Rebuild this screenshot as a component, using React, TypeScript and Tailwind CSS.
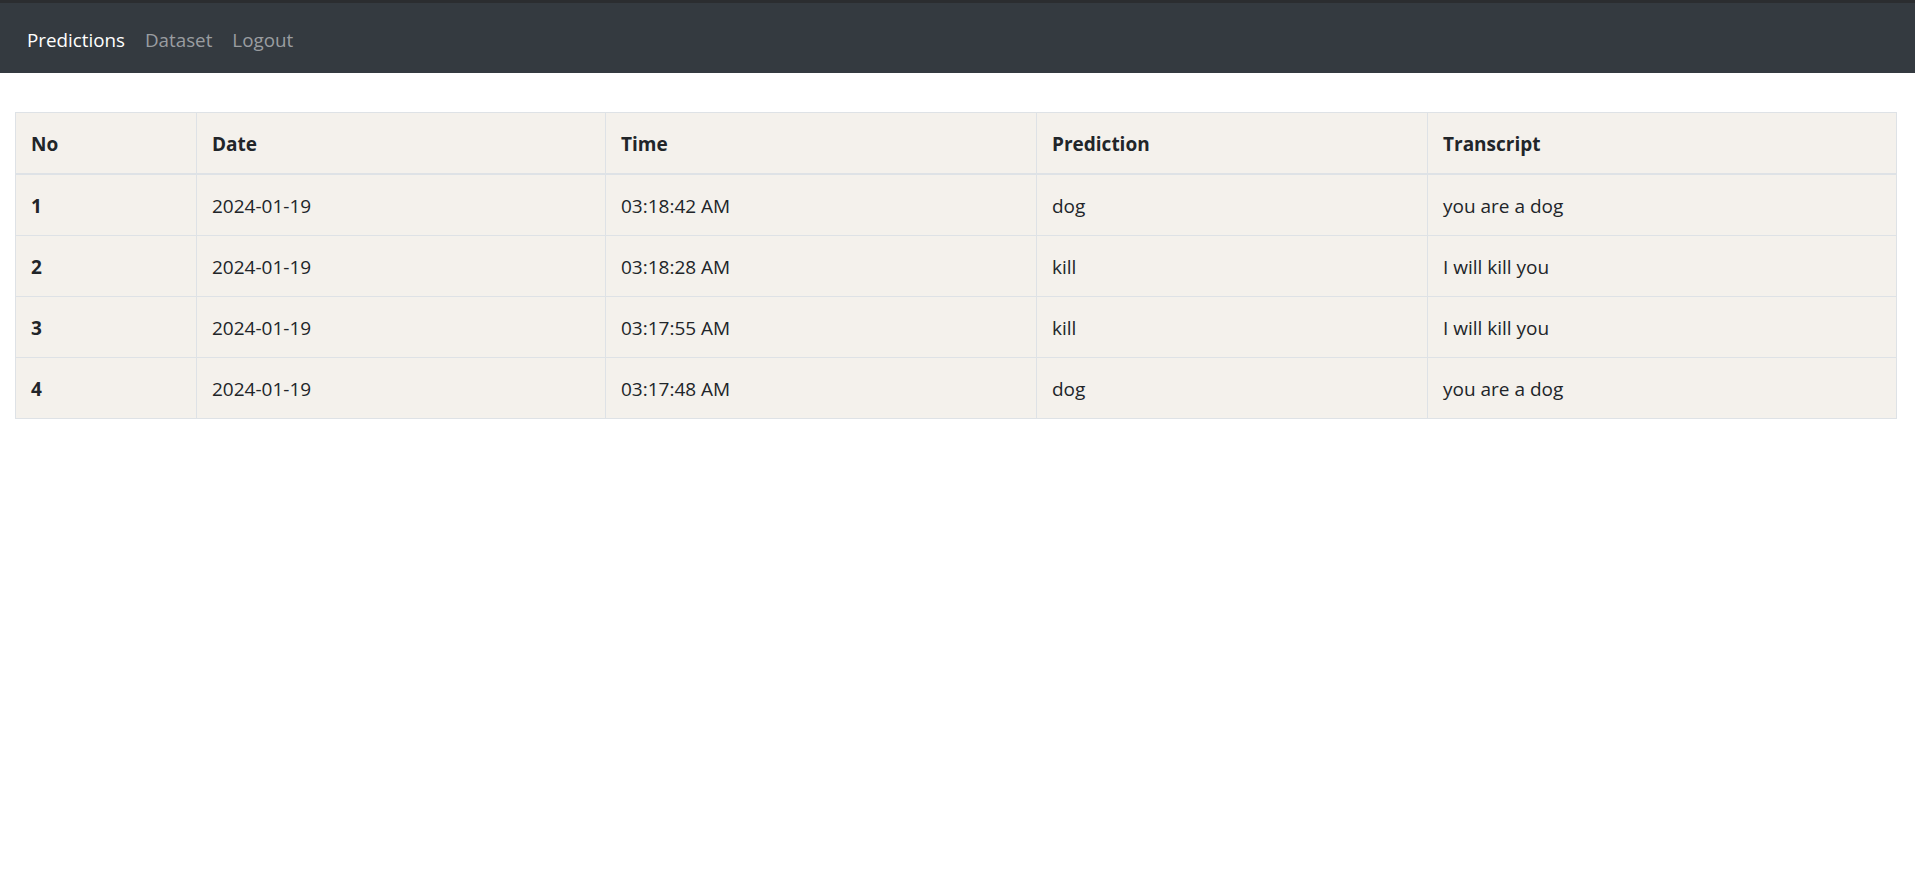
import React from 'react';

interface Prediction {
  no: number;
  date: string;
  time: string;
  prediction: string;
  transcript: string;
}

const predictions: Prediction[] = [
  { no: 1, date: '2024-01-19', time: '03:18:42 AM', prediction: 'dog', transcript: 'you are a dog' },
  { no: 2, date: '2024-01-19', time: '03:18:28 AM', prediction: 'kill', transcript: 'I will kill you' },
  { no: 3, date: '2024-01-19', time: '03:17:55 AM', prediction: 'kill', transcript: 'I will kill you' },
  { no: 4, date: '2024-01-19', time: '03:17:48 AM', prediction: 'dog', transcript: 'you are a dog' },
];

const App: React.FC = () => {
  return (
    <div className="min-h-screen bg-white text-[#212529] font-['Open_Sans',sans-serif] text-[19px]">
      {/* Navbar */}
      <nav className="h-[73px] bg-[#343a40] border-t-[3px] border-[#2b2d30] flex items-center pt-[4px] px-[17px] text-[18.8px]">
        <a href="#" className="px-[10px] text-white">Predictions</a>
        <a href="#" className="px-[10px] text-[#9a9da0]">Dataset</a>
        <a href="#" className="px-[10px] text-[#9a9da0]">Logout</a>
      </nav>

      {/* Predictions table */}
      <div className="pl-[15px] pr-[18px] pt-[39px]">
        <table className="w-full border-collapse bg-[#f4f1ec] leading-[30px]">
          <thead>
            <tr>
              <th className="w-[181px] border border-b-2 border-[#dee2e6] px-[15px] pt-[16px] pb-[14px] text-left font-bold">No</th>
              <th className="w-[409px] border border-b-2 border-[#dee2e6] px-[15px] pt-[16px] pb-[14px] text-left font-bold">Date</th>
              <th className="w-[431px] border border-b-2 border-[#dee2e6] px-[15px] pt-[16px] pb-[14px] text-left font-bold">Time</th>
              <th className="w-[391px] border border-b-2 border-[#dee2e6] px-[15px] pt-[16px] pb-[14px] text-left font-bold">Prediction</th>
              <th className="border border-b-2 border-[#dee2e6] px-[15px] pt-[16px] pb-[14px] text-left font-bold">Transcript</th>
            </tr>
          </thead>
          <tbody>
            {predictions.map((p) => (
              <tr key={p.no}>
                <td className="border border-[#dee2e6] px-[15px] pt-[16px] pb-[14px] font-bold">{p.no}</td>
                <td className="border border-[#dee2e6] px-[15px] pt-[16px] pb-[14px]">{p.date}</td>
                <td className="border border-[#dee2e6] px-[15px] pt-[16px] pb-[14px]">{p.time}</td>
                <td className="border border-[#dee2e6] px-[15px] pt-[16px] pb-[14px]">{p.prediction}</td>
                <td className="border border-[#dee2e6] px-[15px] pt-[16px] pb-[14px]">{p.transcript}</td>
              </tr>
            ))}
          </tbody>
        </table>
      </div>
    </div>
  );
};

export default App;
